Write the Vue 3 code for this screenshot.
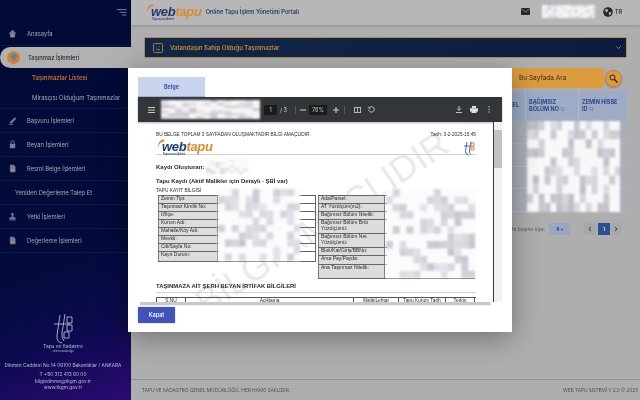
<script setup>
const seeded = (seed) => {
  let s = seed
  return () => {
    s = (s * 9301 + 49297) % 233280
    return s / 233280
  }
}
const noise = (cols, rows, seed, cw, ch, density, shade) => {
  const r = seeded(seed)
  const cells = []
  for (let y = 0; y < rows; y++) {
    for (let x = 0; x < cols; x++) {
      if (r() < density) {
        const g = Math.round(shade + r() * 30)
        cells.push({ id: x + '-' + y, x: x * cw, y: y * ch, w: cw, h: ch, fill: `rgb(${g},${g},${g + 8})` })
      }
    }
  }
  return cells
}
const patches = {
  head: noise(18, 5, 11, 3, 3, 0.45, 205),
  tool: noise(14, 7, 23, 7.2, 2.8, 0.5, 195),
  creator: noise(9, 5, 37, 5, 3.2, 0.5, 210),
  left: noise(12, 10, 41, 7, 7.4, 0.42, 198),
  right: noise(13, 12, 59, 7, 7.6, 0.4, 198),
  table: noise(16, 10, 71, 6, 9.4, 0.38, 190),
}
const menuTop = [{ label: 'Anasayfa', icon: 'home' }]
const subMenu = [
  { label: 'Taşınmazlar Listesi', active: true },
  { label: 'Mirasçısı Olduğum Taşınmazlar', active: false },
]
const menuBottom = [
  { label: 'Başvuru İşlemleri', icon: 'pen' },
  { label: 'Beyan İşlemleri', icon: 'lock' },
  { label: 'Resmi Belge İşlemleri', icon: 'doc' },
  { label: 'Yeniden Değerleme Talep Et', icon: '' },
  { label: 'Yetki İşlemleri', icon: 'stamp' },
  { label: 'Değerleme İşlemleri', icon: 'doc' },
]
const leftRows = ['Zemin Tipi:', 'Taşınmaz Kimlik No:', 'İl/İlçe:', 'Kurum Adı:', 'Mahalle/Köy Adı:', 'Mevkii:', 'Cilt/Sayfa No:', 'Kayıt Durum:']
const rightRows = [
  { t: 'Ada/Parsel:', h: 8 },
  { t: 'AT Yüzölçüm(m2):', h: 8 },
  { t: 'Bağımsız Bölüm Nitelik:', h: 8 },
  { t: 'Bağımsız Bölüm Brüt Yüzölçümü:', h: 14 },
  { t: 'Bağımsız Bölüm Net Yüzölçümü:', h: 14 },
  { t: 'Blok/Kat/Giriş/BBNo:', h: 8 },
  { t: 'Arsa Pay/Payda:', h: 9 },
  { t: 'Ana Taşınmaz Nitelik:', h: 14 },
]
const lienCols = [
  { t: 'S.NU', w: 29 },
  { t: 'Açıklama', w: 168 },
  { t: 'Malik/Lehtar', w: 45 },
  { t: 'Tapu Kurum Tarih', w: 47 },
  { t: 'Terkin', w: 29 },
]
</script>

<template>
  <div class="app">
    <aside class="sidebar">
      <div class="side-top">
        <svg width="10" height="7" viewBox="0 0 10 7"><path d="M0 .6h9.5M2.5 3.3h7M5 6h4.5" stroke="#5d7fa6" stroke-width="1" /></svg>
      </div>
      <div v-for="m in menuTop" :key="m.label" class="menu-row">
        <svg class="mi" viewBox="0 0 12 12"><path d="M6 1 .8 6h1.7v5h7V6h1.7z" fill="#6c7aa3" /><rect x="4.5" y="7" width="3" height="4" fill="#c98a2e" /></svg>
        <span>{{ m.label }}</span>
      </div>
      <div class="menu-active">
        <span class="pin">
          <svg width="8" height="9" viewBox="0 0 8 9"><path d="M4 .5a3 3 0 0 0-3 3c0 2.2 3 5 3 5s3-2.8 3-5a3 3 0 0 0-3-3z" fill="#5f7fb5" /></svg>
        </span>
        <span>Taşınmaz İşlemleri</span>
      </div>
      <div class="submenu">
        <div v-for="s in subMenu" :key="s.label" class="sub" :class="{ on: s.active }">{{ s.label }}</div>
      </div>
      <div v-for="m in menuBottom" :key="m.label" class="menu-row" :class="{ bare: !m.icon }">
        <svg v-if="m.icon === 'pen'" class="mi" viewBox="0 0 12 12"><path d="M9 1.5 11 3.5 5 9.5l-2.6.6.6-2.6z" fill="#6c7aa3" /><path d="M1 11h6" stroke="#c98a2e" /></svg>
        <svg v-else-if="m.icon === 'lock'" class="mi" viewBox="0 0 12 12"><path d="M3.8 5V3.4a2.2 2.2 0 0 1 4.4 0V5" fill="none" stroke="#7d8aac" stroke-width="1.2" /><rect x="2.4" y="5" width="7.2" height="6" rx=".6" fill="#6c7aa3" /><rect x="5.2" y="7" width="1.6" height="2.4" fill="#c98a2e" /></svg>
        <svg v-else-if="m.icon === 'doc'" class="mi" viewBox="0 0 12 12"><path d="M2.5 1h5L10 3.5V11H2.500z" fill="#6c7aa3" /><rect x="4.200" y="6.500" width="3.800" height="3" fill="#c98a2e" /></svg>
        <svg v-else-if="m.icon === 'stamp'" class="mi" viewBox="0 0 12 12"><path d="M6 1a1.800 1.800 0 0 0-1 3.300V7H2v2.500h8V7H7V4.300A1.800 1.800 0 0 0 6 1z" fill="#6c7aa3" /><rect x="1.500" y="10" width="9" height="1.200" fill="#6c7aa3" /></svg>
        <span>{{ m.label }}</span>
      </div>
      <div class="org">
        <svg class="org-mark" width="22" height="32" viewBox="0 0 22 32" fill="none" stroke="#c9ccd6" stroke-width=".8">
          <path d="M8 2 5 22q-.8 7 5 8M13 1l-3 19q-.6 5 2 8M2 11h16M15 4h5v6h-5zM15 12h5v6h-5zM12 19h5v6h-5z" />
        </svg>
        <div class="org-name">Tapu ve Kadastro</div>
        <div class="org-sub">Genel Müdürlüğü</div>
        <div class="addr">Dikmen Caddesi No:14 06100 Bakanlıklar / ANKARA</div>
        <div class="contact">T +90 312 413 60 00</div>
        <div class="contact">bilgiedinme@tkgm.gov.tr</div>
        <div class="contact">www.tkgm.gov.tr</div>
      </div>
    </aside>

    <main class="main">
      <header class="topbar">
        <div class="logo">
          <svg class="swoosh" width="8" height="9" viewBox="0 0 8 9"><path d="M7.500.6C4 .4 1.300 2.500.8 8.500 2 5 3.800 3 7 2.600z" fill="#e0862a" /></svg>
          <span class="web">web</span><span class="tapu">tapu</span>
          <span class="logo-sub">Tapunuzun Adresi</span>
        </div>
        <div class="portal">Online Tapu İşlem Yönetimi Portalı</div>
        <div class="top-right">
          <svg width="9" height="7" viewBox="0 0 9 7"><rect width="9" height="7" rx=".8" fill="#2a2a2e" /><path d="M.5 1.200 4.500 4l4-2.800" stroke="#aaa" stroke-width=".6" fill="none" /></svg>
          <svg class="patch head-patch" width="53" height="13" viewBox="0 0 54 15" preserveAspectRatio="none">
            <rect width="54" height="15" fill="#f4f4f4" />
            <rect v-for="c in patches.head" :key="c.id" :x="c.x" :y="c.y" :width="c.w" :height="c.h" :fill="c.fill" />
          </svg>
          <div class="lang">
            <svg width="10" height="10" viewBox="0 0 10 10"><circle cx="5" cy="5" r="4.800" fill="#26262a" /><path d="M2 2.500 4.500 2 5 4 3 5.500zM6 5l2.500.5L7 8.500 5.800 7z" fill="#c0c0c0" /></svg>
            <span>TR</span>
          </div>
        </div>
      </header>

      <section class="content">
        <div class="banner">
          <svg width="10" height="10" viewBox="0 0 10 10" fill="none" stroke="#d08f33" stroke-width=".8"><rect x=".5" y=".5" width="9" height="9" rx="1.200" /><path d="M3 6.200q2 1.600 4 0M3.300 3.600h.6M6.100 3.600h.6" /></svg>
          <span class="banner-text">Vatandaşın Sahip Olduğu Taşınmazlar</span>
          <svg class="chev" width="5" height="3" viewBox="0 0 5 3"><path d="M.4.400 2.500 2.500 4.600.400" stroke="#c98a2e" stroke-width=".8" fill="none" /></svg>
        </div>
        <div class="search-row">
          <div class="search-input">Bu Sayfada Ara</div>
          <button class="search-btn">
            <svg width="9" height="9" viewBox="0 0 9 9"><circle cx="3.500" cy="3.500" r="2.500" fill="none" stroke="#1d2333" stroke-width="1" /><path d="m5.500 5.500 3 3" stroke="#1d2333" stroke-width="1.400" /></svg>
          </button>
        </div>
        <div class="grid">
          <div class="grid-head">
            <div class="gh gh-a">PARSEL</div>
            <div class="gh gh-b"><span>BAĞIMSIZ<br />BÖLÜM NO <i>⇅</i></span></div>
            <div class="gh gh-c"><span>ZEMİN HİSSE<br />ID <i>⇅</i></span></div>
          </div>
          <div class="grid-body">
            <div v-for="n in 4" :key="n" class="grid-line"></div>
            <svg class="patch table-patch" width="93" height="91" viewBox="0 0 95 94" preserveAspectRatio="none">
              <rect width="95" height="94" fill="#f8f8f9" />
              <rect v-for="c in patches.table" :key="c.id" :x="c.x" :y="c.y" :width="c.w" :height="c.h" :fill="c.fill" />
            </svg>
          </div>
        </div>
        <div class="pager">
          <span class="per">Sayfa başına öğe:</span>
          <span class="select">8 <small>▾</small></span>
          <span class="pg arrow">‹</span>
          <span class="pg cur">1</span>
          <span class="pg arrow">›</span>
        </div>
      </section>

      <footer class="foot">
        <span>TAPU VE KADASTRO GENEL MÜDÜRLÜĞÜ, HER HAKKI SAKLIDIR.</span>
        <span>WEB TAPU SİSTEMİ V 2.0 © 2025</span>
      </footer>
    </main>

    <div class="backdrop">
      <div class="modal">
        <div class="tab">Belge</div>
        <div class="viewer">
          <div class="toolbar">
            <svg width="7" height="6" viewBox="0 0 7 6"><path d="M0 .5h7M0 3h7M0 5.500h7" stroke="#c8c8c8" stroke-width="1" /></svg>
            <svg class="patch tool-patch" width="99" height="19" viewBox="0 0 101 20" preserveAspectRatio="none">
              <rect width="101" height="20" fill="#f5f5f5" />
              <rect v-for="c in patches.tool" :key="c.id" :x="c.x" :y="c.y" :width="c.w" :height="c.h" :fill="c.fill" />
            </svg>
            <span class="pagebox">1</span>
            <span class="tb-txt">/ 3</span>
            <span class="tb-sep sep-a"></span>
            <svg width="6" height="6" viewBox="0 0 6 6"><path d="M0 3h6" stroke="#d0d0d0" stroke-width="1" /></svg>
            <span class="zoombox">76%</span>
            <svg width="6" height="6" viewBox="0 0 6 6"><path d="M0 3h6M3 0v6" stroke="#d0d0d0" stroke-width="1" /></svg>
            <span class="tb-sep sep-b"></span>
            <svg width="7" height="6" viewBox="0 0 7 6" fill="none" stroke="#d0d0d0" stroke-width=".8"><rect x=".4" y=".4" width="6.200" height="5.200" /><path d="M3.500.4v5.200" /></svg>
            <svg class="rotate" width="7" height="7" viewBox="0 0 7 7" fill="none" stroke="#d0d0d0" stroke-width=".9"><path d="M1.500 1.600a2.700 2.700 0 1 1-.7 2" /><path d="M.9.700v1.500h1.500" /></svg>
            <span class="tb-grow"></span>
            <svg width="6" height="7" viewBox="0 0 6 7"><path d="M3 0v4M1.200 2.500 3 4.500l1.800-2M0 6.500h6" stroke="#d0d0d0" stroke-width=".9" fill="none" /></svg>
            <svg class="print" width="8" height="7" viewBox="0 0 8 7"><path d="M2 0h4v2H2zM0 2.200h8V5.500H6.500V7h-5V5.500H0z" fill="#e0e0e0" /></svg>
            <svg width="2" height="7" viewBox="0 0 2 7"><path d="M1 .2v1.300M1 2.800v1.300M1 5.400v1.300" stroke="#d0d0d0" stroke-width="1" /></svg>
          </div>
          <div class="doc-wrap">
            <div class="doc">
              <div class="watermark">BİLGİ AMAÇLIDIR</div>
              <div class="doc-top">
                <span>BU BELGE TOPLAM 3 SAYFADAN OLUŞMAKTADIR BİLGİ AMAÇLIDIR.</span>
                <span>Tarih: 3-2-2025-15:45</span>
              </div>
              <div class="doc-logo">
                <div class="logo">
                  <svg class="swoosh" width="8" height="9" viewBox="0 0 8 9"><path d="M7.500.6C4 .4 1.300 2.500.8 8.500 2 5 3.800 3 7 2.600z" fill="#e0862a" /></svg>
                  <span class="web">web</span><span class="tapu">tapu</span>
                  <span class="logo-sub">Tapunuzun Adresi</span>
                </div>
                <svg width="12" height="15" viewBox="0 0 12 15" fill="none" stroke-width=".9"><path d="M4 1 2.500 10q-.4 3.500 3 4" stroke="#2d5aa8" /><path d="M8 .5 6.500 9q-.3 3 1 4.500" stroke="#2d5aa8" /><path d="M1 5h6" stroke="#2d5aa8" /><path d="M8 2h3v3H8zM8 6h3v3H8z" stroke="#d9772b" /></svg>
              </div>
              <div class="doc-creator">
                <b>Kaydı Oluşturan:</b>
                <svg class="patch" width="42" height="15" viewBox="0 0 45 16" preserveAspectRatio="none">
                  <rect width="45" height="16" fill="#fafafa" />
                  <rect v-for="c in patches.creator" :key="c.id" :x="c.x" :y="c.y" :width="c.w" :height="c.h" :fill="c.fill" />
                </svg>
              </div>
              <div class="doc-h1">Tapu Kaydı (Aktif Malikler için Detaylı - ŞBİ var)</div>
              <div class="doc-cap">TAPU KAYIT BİLGİSİ</div>
              <div class="tables">
                <div class="kv left-kv">
                  <div v-for="(t, i) in leftRows" :key="t" class="kv-row" :class="{ tall: i === 7 }">
                    <div class="k">{{ t }}</div>
                    <div class="v"></div>
                  </div>
                  <svg class="patch kv-patch" width="82" height="72" viewBox="0 0 83 74" preserveAspectRatio="none">
                    <rect width="83" height="74" fill="#fbfbfc" />
                    <rect v-for="c in patches.left" :key="c.id" :x="c.x" :y="c.y" :width="c.w" :height="c.h" :fill="c.fill" />
                  </svg>
                </div>
                <div class="kv right-kv">
                  <div v-for="r in rightRows" :key="r.t" class="kv-row" :style="{ height: r.h + 'px' }">
                    <div class="k">{{ r.t }}</div>
                    <div class="v"></div>
                  </div>
                  <svg class="patch kv-patch" width="90" height="89" viewBox="0 0 92 91" preserveAspectRatio="none">
                    <rect width="92" height="91" fill="#fbfbfc" />
                    <rect v-for="c in patches.right" :key="c.id" :x="c.x" :y="c.y" :width="c.w" :height="c.h" :fill="c.fill" />
                  </svg>
                </div>
              </div>
              <div class="doc-h2">TAŞINMAZA AİT ŞERH BEYAN İRTİFAK BİLGİLERİ</div>
              <div class="lien">
                <div v-for="c in lienCols" :key="c.t" class="lien-c" :style="{ width: c.w + 'px' }">{{ c.t }}</div>
              </div>
            </div>
            <div class="vbar"><div class="vthumb"></div></div>
          </div>
          <div class="hbar"><div class="hthumb"></div></div>
        </div>
        <button class="close">Kapat</button>
      </div>
    </div>
  </div>
</template>

<style>
html, body { margin: 0; background: #b0b0b0; }
</style>

<style scoped>
.app {
  position: relative;
  display: flex;
  width: 640px;
  height: 400px;
  overflow: hidden;
  font-family: Inter, "Open Sans", sans-serif;
  filter: blur(0.35px);
}
.sidebar {
  flex: 0 0 131px;
  display: flex;
  flex-direction: column;
  background: linear-gradient(162deg, #020a35 0%, #020b3a 62%, #0c0a50 82%, #2c0a72 100%);
  color: #a5a9b8;
  font-size: 5.8px;
}
.side-top {
  height: 22px;
  display: flex;
  justify-content: flex-end;
  align-items: center;
  padding: 2px 4px 0 0;
  box-sizing: border-box;
}
.menu-row {
  height: 24px;
  flex: none;
  box-sizing: border-box;
  display: flex;
  align-items: center;
  gap: 10px;
  padding-left: 8px;
  border-bottom: 1px solid #0b1a4e;
}
.menu-row.bare { padding-left: 15px; }
.mi { width: 9px; height: 9px; flex: none; }
.menu-active {
  height: 21px;
  flex: none;
  margin-top: 1px;
  display: flex;
  align-items: center;
  gap: 8px;
  padding-left: 7px;
  background: #b1b1b1;
  border-radius: 11px 0 0 11px;
  color: #23262f;
  font-weight: 500;
}
.pin {
  width: 13px;
  height: 13px;
  border-radius: 50%;
  background: #d8812a;
  display: flex;
  align-items: center;
  justify-content: center;
}
.submenu {
  height: 41px;
  flex: none;
  border-bottom: 1px solid #0b1a4e;
  box-sizing: border-box;
}
.sub { height: 20px; line-height: 20px; padding-left: 32px; white-space: nowrap; font-size: 6px; }
.sub.on { color: #c9702a; font-weight: 600; }
.org {
  margin-top: auto;
  padding: 0 5px 10px 0;
  display: flex;
  flex-direction: column;
  align-items: center;
  color: #b9bcd0;
  font-size: 4.8px;
}
.org-mark { margin-bottom: -3px; }
.org-name { margin-top: 1px; font-size: 4.8px; }
.org-sub { font-size: 2.6px; line-height: 4px; }
.addr { margin-top: 9px; margin-bottom: 3px; white-space: nowrap; }
.contact { line-height: 6.2px; }

.main { flex: 1; display: flex; flex-direction: column; min-width: 0; background: #aeaeae; }
.topbar {
  height: 25px;
  flex: none;
  display: flex;
  align-items: center;
  background: #b7b7b7;
  box-shadow: 0 1px 3px rgba(0, 0, 0, 0.18);
  padding: 0 0 2px 15px;
  box-sizing: border-box;
}
.logo {
  position: relative;
  display: inline-flex;
  align-items: baseline;
  padding-left: 5px;
  font-family: "Liberation Sans", sans-serif;
  font-size: 13px;
  font-style: italic;
  font-weight: 700;
  letter-spacing: -0.3px;
  line-height: 11px;
}
.swoosh { position: absolute; left: 0; top: -2px; }
.web { color: #1f3b72; }
.tapu { color: #dd8a2d; }
.logo-sub {
  position: absolute;
  left: 6px;
  top: 12px;
  font-size: 2.6px;
  line-height: 3px;
  font-style: normal;
  letter-spacing: 0;
  color: #2c4b82;
  white-space: nowrap;
}
.portal { margin-left: 4px; font-size: 5.7px; font-weight: 600; color: #27406f; white-space: nowrap; }
.top-right { margin-left: auto; display: flex; align-items: center; padding-right: 18px; }
.head-patch { margin-left: 12px; }
.lang {
  margin-left: 8px;
  display: flex;
  align-items: center;
  gap: 2px;
  font-size: 5.5px;
  font-weight: 600;
  color: #2f2f33;
}
.patch { display: block; flex: none; filter: blur(1px); }

.content { flex: 1; padding: 12px 13px 0; display: flex; flex-direction: column; box-sizing: border-box; }
.banner {
  height: 21px;
  flex: none;
  box-sizing: border-box;
  display: flex;
  align-items: center;
  border: 1px solid #b08a4e;
  border-radius: 1px;
  padding-left: 8px;
  background: linear-gradient(90deg, #13294a, #0d1c3e);
  color: #c98a2e;
  font-size: 6px;
  font-weight: 600;
}
.banner-text { margin-left: 7px; }
.chev { margin-left: auto; margin-right: 5px; }
.search-row { display: flex; align-items: center; margin-top: 10px; padding-right: 5px; height: 20px; flex: none; }
.search-input {
  flex: 1;
  height: 20px;
  line-height: 20px;
  background: #dc9b3d;
  border-radius: 1px;
  padding-left: 375px;
  font-size: 6.5px;
  color: #39322a;
}
.search-btn {
  width: 17px;
  height: 17px;
  margin-left: 1px;
  padding: 0;
  border: 1px solid #c18634;
  border-radius: 50%;
  background: #dc9b3d;
  display: flex;
  align-items: center;
  justify-content: center;
  box-shadow: 0 1px 2px rgba(0, 0, 0, 0.25);
}
.grid { margin-top: 3px; flex: none; }
.grid-head {
  display: flex;
  height: 30px;
  background: #9dabc6;
  color: #2c4a8a;
  font-size: 5.5px;
  font-weight: 700;
  line-height: 7.500px;
}
.gh { display: flex; align-items: center; padding-left: 3px; box-sizing: border-box; }
.gh i { font-style: normal; font-weight: 400; color: #6a7ba0; }
.gh-a { flex: 1; justify-content: flex-end; padding-right: 6px; }
.gh-b { width: 53px; border-left: 1px solid #aebad0; }
.gh-c { width: 49px; border-left: 1px solid #aebad0; }
.grid-body { position: relative; height: 91px; background: #a9aeb9; }
.grid-line { height: 22.750px; box-sizing: border-box; border-bottom: 1px solid #b4b8c2; }
.table-patch { position: absolute; right: 7px; top: 0; }
.pager {
  margin-top: 11px;
  height: 12px;
  display: flex;
  align-items: center;
  padding-right: 5px;
  justify-content: flex-end;
  font-size: 5px;
  color: #5c5f66;
}
.select {
  margin-left: 4px;
  width: 21px;
  height: 12px;
  line-height: 12px;
  text-align: center;
  background: #9aa7c0;
  color: #2c4a8a;
  font-weight: 700;
  margin-right: 14px;
}
.select small { font-size: 3.500px; }
.pg { width: 12px; height: 12px; line-height: 11px; text-align: center; background: #a4a4a4; font-size: 9px; color: #333; }
.pg.arrow { background: #a8a8ac; }
.pg.cur { background: #2c4e92; color: #cfd6e6; font-size: 5px; line-height: 12px; font-weight: 700; margin-left: 2px; }
.foot {
  height: 21px;
  flex: none;
  box-sizing: border-box;
  border-top: 1px solid #8e8e8e;
  display: flex;
  justify-content: space-between;
  align-items: center;
  padding: 0 2px 0 11px;
  font-family: "Open Sans", sans-serif;
  font-size: 5px;
  color: #4b4b4b;
}

.backdrop {
  position: absolute;
  inset: 0;
  display: flex;
  align-items: center;
  justify-content: center;
}
.modal {
  width: 384px;
  height: 264px;
  box-sizing: border-box;
  padding: 9px 10px;
  background: #fff;
  box-shadow: 0 6px 26px rgba(0, 0, 0, 0.35);
  display: flex;
  flex-direction: column;
}
.tab {
  width: 67px;
  height: 20px;
  flex: none;
  box-sizing: border-box;
  border-bottom: 1px solid #a4b3dc;
  background: #c9d5ee;
  color: #3456b5;
  font-size: 5.5px;
  font-weight: 700;
  text-align: center;
  line-height: 21px;
}
.viewer { height: 209px; flex: none; display: flex; flex-direction: column; }
.toolbar {
  height: 25px;
  flex: none;
  display: flex;
  align-items: center;
  background: #323639;
  padding: 0 12px 0 10px;
  color: #d5d5d5;
  font-size: 5.500px;
  box-shadow: 0 1px 2px rgba(0, 0, 0, 0.3);
}
.tool-patch { margin-left: 6px; }
.pagebox {
  margin-left: 4px;
  width: 13px;
  height: 10px;
  line-height: 10px;
  text-align: center;
  background: #191b1c;
}
.tb-txt { margin-left: 3px; }
.tb-sep { width: 1px; height: 8px; background: #55595c; }
.sep-a { margin: 0 4px 0 8px; }
.sep-b { margin: 0 9px 0 5px; }
.zoombox {
  width: 18px;
  height: 10px;
  line-height: 10px;
  text-align: center;
  background: #191b1c;
  margin: 0 6px 0 3px;
}
.rotate { margin-left: 7px; }
.tb-grow { flex: 1; }
.print { margin: 0 10px 0 8px; }
.doc-wrap { position: relative; flex: 1; min-height: 0; display: flex; }
.doc {
  position: relative;
  flex: 1;
  min-width: 0;
  overflow: hidden;
  padding: 10px 17px 0 18px;
  font-family: "Liberation Sans", sans-serif;
  color: #2a2a2a;
}
.watermark {
  position: absolute;
  left: 36px;
  top: 80px;
  white-space: nowrap;
  font-size: 36px;
  color: #e9e9e9;
  transform: rotate(-34deg);
  transform-origin: center;
}
.doc-top {
  position: relative;
  display: flex;
  justify-content: space-between;
  height: 6px;
  line-height: 6px;
  font-size: 4.750px;
}
.doc-logo {
  position: relative;
  display: flex;
  justify-content: space-between;
  align-items: flex-start;
  height: 17px;
  box-sizing: border-box;
  padding: 3px 1px 0 1px;
  border-bottom: 1px solid #cfcfcf;
  margin-bottom: 4px;
}
.doc-creator {
  position: relative;
  display: flex;
  align-items: center;
  height: 15px;
  font-size: 6px;
  gap: 2px;
}
.doc-h1 { position: relative; margin-top: 3px; height: 9px; line-height: 9px; font-size: 5.900px; font-weight: 700; }
.doc-cap { position: relative; height: 8px; line-height: 9px; font-size: 4.800px; }
.tables { position: relative; display: flex; align-items: flex-start; gap: 2px; padding-left: 2px; height: 84px; margin-top: 1px; }
.kv { position: relative; border-top: 1px solid #666; }
.kv-row { display: flex; height: 8px; box-sizing: border-box; border-bottom: 1px solid #666; font-size: 5px; line-height: 5.500px; }
.kv-row.tall { height: 10px; }
.k {
  background: #dcdcdc;
  border-left: 1px solid #777;
  border-right: 1px solid #777;
  padding-left: 2px;
  box-sizing: border-box;
  overflow: hidden;
}
.v { border-right: 1px solid #666; box-sizing: border-box; }
.left-kv .k { width: 60px; }
.left-kv .v { width: 98px; }
.right-kv .k { width: 67px; }
.right-kv .v { width: 90px; border-right: 0; }
.kv-patch { position: absolute; left: 60px; top: -7px; }
.right-kv .kv-patch { left: 68px; }
.doc-h2 {
  position: relative;
  margin-top: 3px;
  height: 11px;
  line-height: 9px;
  box-sizing: border-box;
  border-bottom: 1px solid #cfcfcf;
  font-size: 5.900px;
  font-weight: 700;
}
.lien { position: relative; display: flex; margin-top: 4px; border-top: 1px solid #555; border-left: 1px solid #555; }
.lien-c { box-sizing: border-box; border-right: 1px solid #555; font-size: 4.800px; line-height: 6px; text-align: center; height: 7px; white-space: nowrap; overflow: hidden; }
.vbar {
  width: 8px;
  flex: none;
  border-left: 1px solid #3a3a3a;
  background: #f1f1f1;
  box-sizing: content-box;
  padding-top: 8px;
}
.vthumb { height: 38px; background: #c1c1c1; }
.hbar { height: 4px; flex: none; margin: 0 10px 0 2px; background: #f1f1f1; }
.hthumb { height: 3px; width: 350px; background: #c9c9c9; }
.close {
  margin-top: auto;
  width: 37px;
  height: 16px;
  padding: 0;
  border: 0;
  border-radius: 1px;
  background: #4152b8;
  color: #f0f2fa;
  font-family: Inter, sans-serif;
  font-size: 5.500px;
  font-weight: 600;
  box-shadow: 0 0 1px #2a3a90;
}
</style>
